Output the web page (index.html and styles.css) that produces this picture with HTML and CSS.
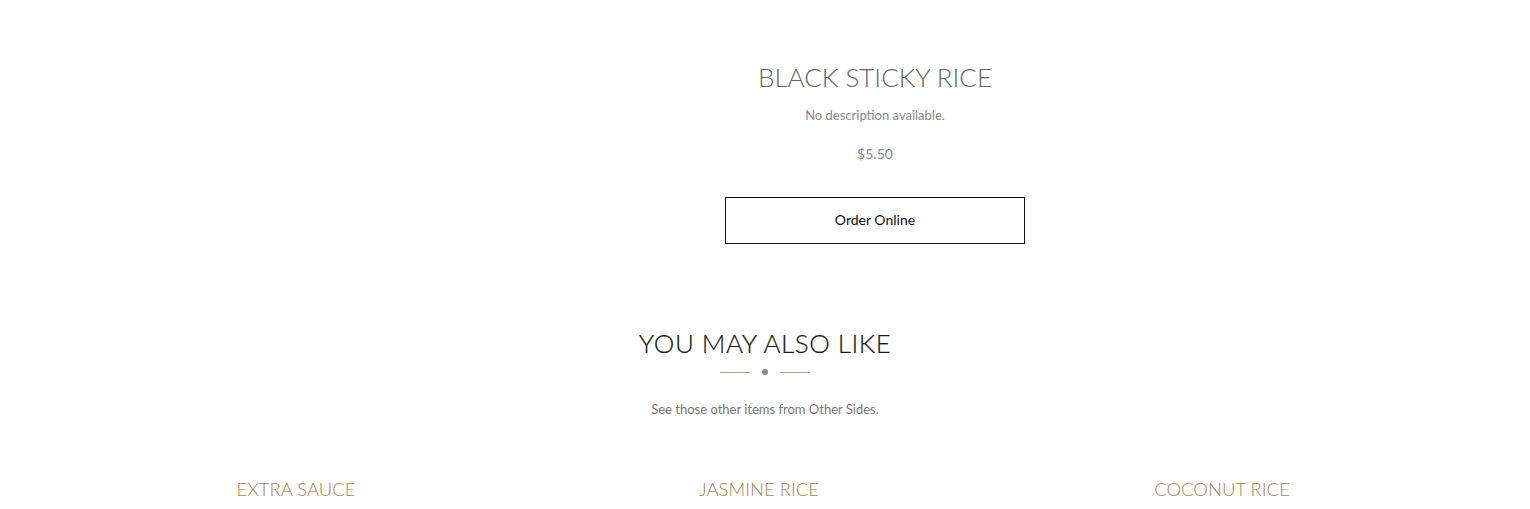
FILE: index.html
```html
<!DOCTYPE html>
<html>
<head>
<meta charset="utf-8">
<link rel="stylesheet" href="styles.css">
</head>
<body>
<section class="product">
  <div class="product-media"></div>
  <div class="product-info">
    <h1 class="product-title">BLACK STICKY RICE</h1>
    <p class="product-desc">No description available.</p>
    <p class="product-price">$5.50</p>
    <a class="order-btn" href="#">Order Online</a>
  </div>
</section>
<section class="related">
  <h2 class="related-title">YOU MAY ALSO LIKE</h2>
  <div class="divider"><span class="line"></span><span class="dot"></span><span class="line"></span></div>
  <p class="related-sub">See those other items from Other Sides.</p>
  <div class="cards">
    <div class="card"><h3 class="card-title">EXTRA SAUCE</h3></div>
    <div class="card"><h3 class="card-title">JASMINE RICE</h3></div>
    <div class="card"><h3 class="card-title">COCONUT RICE</h3></div>
  </div>
</section>
</body>
</html>
```
FILE: styles.css
```css
html, body { margin: 0; padding: 0; background: #fff; }
body { font-family: "Lato", "Liberation Sans", sans-serif; color: #333; overflow: hidden; height: 509px; }

.product {
  width: 1100px;
  margin: 0 auto;
  padding-top: 60px;
  display: grid;
  grid-template-columns: 440px 440px;
}
.product-info {
  display: flex;
  flex-direction: column;
  align-items: center;
  text-align: center;
}
.product-title {
  margin: 0;
  font-weight: 300;
  font-size: 26px;
  line-height: 34px;
  color: #666;
  letter-spacing: 0;
}
.product-desc {
  margin: 12px 0 0;
  font-size: 13px;
  line-height: 18px;
  color: #888;
  font-weight: 400;
}
.product-price {
  margin: 21px 0 0;
  font-size: 14px;
  line-height: 18px;
  color: #888;
}
.order-btn {
  margin-top: 34px;
  box-sizing: border-box;
  width: 300px;
  height: 47px;
  border: 1px solid #111;
  display: flex;
  align-items: center;
  justify-content: center;
  padding-bottom: 3px;
  font-size: 14px;
  color: #111;
  text-decoration: none;
}

.related {
  margin-top: 82px;
  text-align: center;
}
.related-title {
  margin: 0;
  font-weight: 300;
  font-size: 26px;
  line-height: 34px;
  color: #1a1a1a;
  letter-spacing: 0.5px;
  -webkit-text-stroke: 0.2px #1a1a1a;
}
.divider {
  margin-top: 9px;
  display: flex;
  justify-content: center;
  align-items: center;
  gap: 12px;
  height: 6px;
}
.divider .line { width: 30px; height: 1px; background: #b59a86; }
.divider .dot { width: 6px; height: 6px; border-radius: 50%; background: #888; }
.related-sub {
  margin: 25px 0 0;
  font-size: 13px;
  line-height: 18px;
  color: #777;
}
.cards {
  width: 1389px;
  margin: 59px auto 0;
  display: grid;
  grid-template-columns: repeat(3, 1fr);
  transform: translateX(-6px);
}
.card-title {
  margin: 0;
  font-weight: 300;
  font-size: 18.5px;
  line-height: 24px;
  color: #b08048;
}
```
